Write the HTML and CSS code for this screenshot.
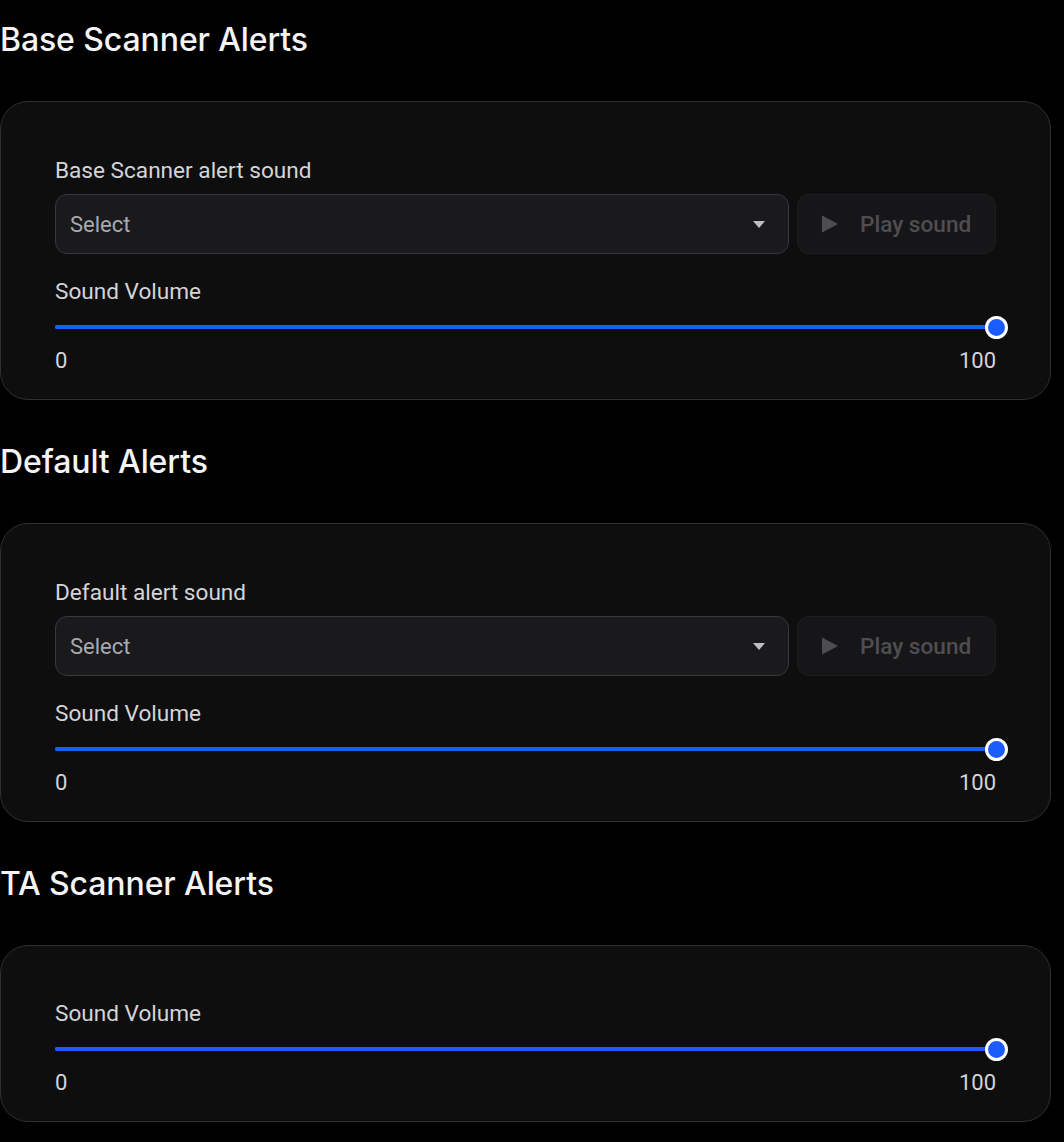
FILE: index.html
```html
<!DOCTYPE html>
<html lang="en">
<head>
<meta charset="utf-8">
<title>Alert Settings</title>
<link rel="stylesheet" href="styles.css">
</head>
<body>
<main class="page">
  <section class="section">
    <h2 class="section-title">Base Scanner Alerts</h2>
    <div class="card">
      <label class="field-label">Base Scanner alert sound</label>
      <div class="sound-row">
        <div class="select">
          <span class="select-value">Select</span>
          <svg class="caret" width="12" height="7" viewBox="0 0 12 7"><path d="M0 0H12L6 7Z" fill="#bdbdc2"/></svg>
        </div>
        <button class="play-btn" disabled>
          <svg width="18" height="20" viewBox="0 0 18 20"><path d="M1 1.5V18.5L17 10Z" fill="#4e4e52"/></svg>
          <span>Play sound</span>
        </button>
      </div>
      <label class="field-label volume-label">Sound Volume</label>
      <div class="slider"><div class="slider-fill" style="width:100%"></div><div class="slider-thumb" style="left:100%"></div></div>
      <div class="slider-scale"><span>0</span><span>100</span></div>
    </div>
  </section>

  <section class="section">
    <h2 class="section-title">Default Alerts</h2>
    <div class="card">
      <label class="field-label">Default alert sound</label>
      <div class="sound-row">
        <div class="select">
          <span class="select-value">Select</span>
          <svg class="caret" width="12" height="7" viewBox="0 0 12 7"><path d="M0 0H12L6 7Z" fill="#bdbdc2"/></svg>
        </div>
        <button class="play-btn" disabled>
          <svg width="18" height="20" viewBox="0 0 18 20"><path d="M1 1.5V18.5L17 10Z" fill="#4e4e52"/></svg>
          <span>Play sound</span>
        </button>
      </div>
      <label class="field-label volume-label">Sound Volume</label>
      <div class="slider"><div class="slider-fill" style="width:100%"></div><div class="slider-thumb" style="left:100%"></div></div>
      <div class="slider-scale"><span>0</span><span>100</span></div>
    </div>
  </section>

  <section class="section">
    <h2 class="section-title">TA Scanner Alerts</h2>
    <div class="card card-compact">
      <label class="field-label">Sound Volume</label>
      <div class="slider"><div class="slider-fill" style="width:100%"></div><div class="slider-thumb" style="left:100%"></div></div>
      <div class="slider-scale"><span>0</span><span>100</span></div>
    </div>
  </section>
</main>
</body>
</html>
```

FILE: styles.css
```css
* { box-sizing: border-box; }

html, body {
  margin: 0;
  background: #000;
}

body {
  font-family: Roboto, "Liberation Sans", sans-serif;
  color: #d6d6da;
}

.page {
  width: 1051px;
  padding-top: 16px;
  display: flex;
  flex-direction: column;
  gap: 38px;
}

.section-title {
  margin: 0 0 37px;
  font-family: Inter, "Liberation Sans", sans-serif;
  font-weight: 500;
  font-size: 32px;
  line-height: 48px;
  letter-spacing: -0.1px;
  color: #f4f4f6;
}

.card {
  background: #0e0e0f;
  border: 1.5px solid #2f2f34;
  border-radius: 28px;
  padding: 56px 54px 25px 54px;
  display: flex;
  flex-direction: column;
}

.card-compact {
  padding-top: 55px;
}

.field-label {
  font-size: 22.6px;
  line-height: 26px;
  color: #d4d4d8;
}

.sound-row {
  display: flex;
  gap: 8px;
  margin-top: 10px;
}

.select {
  flex: 1;
  height: 60px;
  background: #1a1a1d;
  border: 1.5px solid #38383d;
  border-radius: 12px;
  display: flex;
  align-items: center;
  justify-content: space-between;
  padding: 0 23px 0 14px;
}

.select-value {
  font-size: 22px;
  color: #a9a9ae;
}

.play-btn {
  width: 199px;
  height: 60px;
  background: #161618;
  border: 1px solid #1e1e21;
  border-radius: 12px;
  display: flex;
  align-items: center;
  gap: 21px;
  padding: 0 0 0 23px;
  font-family: Roboto, "Liberation Sans", sans-serif;
  font-weight: 500;
  font-size: 22.6px;
  color: #4e4e52;
}

.volume-label {
  margin-top: 25px;
}

.slider {
  position: relative;
  height: 4px;
  margin-top: 20px;
  background: #1d5cff;
  border-radius: 2px;
}

.slider-fill {
  height: 100%;
  background: #1a5cff;
  border-radius: 2px;
}

.slider-thumb {
  position: absolute;
  top: 50%;
  width: 23px;
  height: 23px;
  margin: -11.5px 0 0 -11.5px;
  background: #1a5cff;
  border: 3.5px solid #fff;
  border-radius: 50%;
}

.slider-scale {
  display: flex;
  justify-content: space-between;
  margin-top: 19px;
  font-size: 22px;
  line-height: 26px;
  color: #d4d4d8;
}
```
